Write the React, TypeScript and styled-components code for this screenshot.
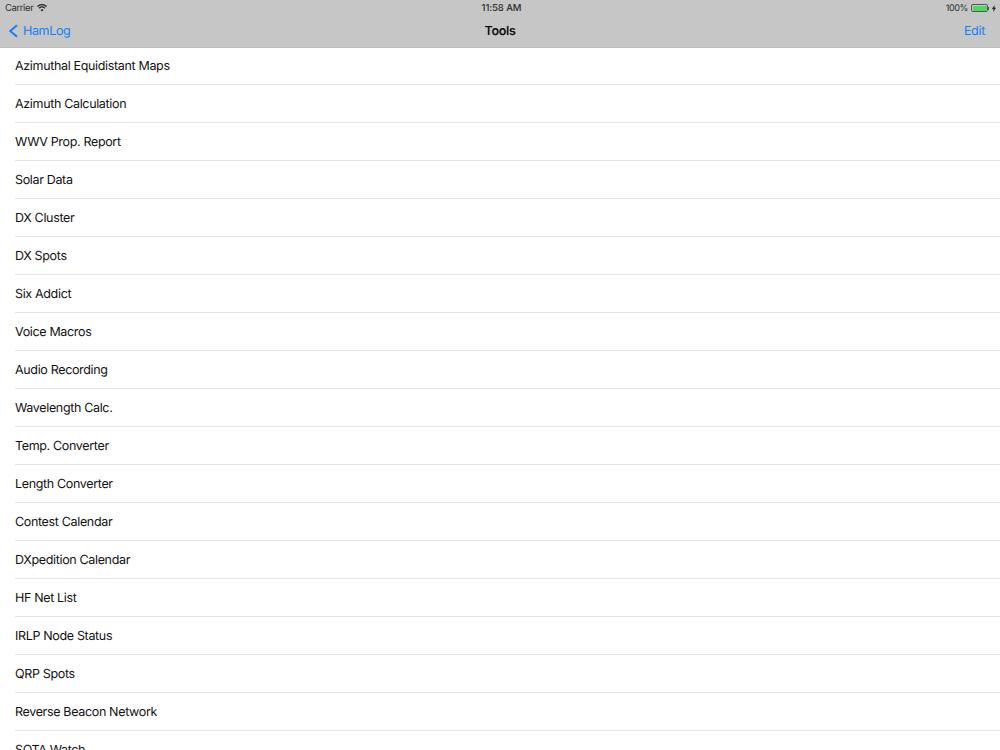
import React from "react";
import styled, { createGlobalStyle } from "styled-components";

const Global = createGlobalStyle`
  html, body { margin: 0; padding: 0; background: #fff; }
  body { font-family: Inter, "Liberation Sans", sans-serif; overflow: hidden; text-rendering: geometricPrecision; }
`;
const Page = styled.div`
  width: 1000px; height: 750px; overflow: hidden; display: flex; flex-direction: column; background: #fff;
`;
const Header = styled.header`
  flex: none; height: 47px; background: #c6c6c6; border-bottom: 1px solid #bcbcbc; box-sizing: content-box;
  display: flex; flex-direction: column;
`;
const StatusBar = styled.div`
  height: 15px; display: grid; grid-template-columns: 1fr auto 1fr; align-items: center;
  padding: 1px 4px 0 5px; box-sizing: border-box; font-size: 9.5px; color: #2e2e2e; letter-spacing: -0.4px;
`;
const StatusLeft = styled.div`display: flex; align-items: center; gap: 4px;`;
const StatusRight = styled.div`display: flex; align-items: center; justify-content: flex-end;`;
const Clock = styled.div`font-weight: 500; letter-spacing: -0.1px; transform: translateX(1px);`;
const Percent = styled.span`font-size: 9px; letter-spacing: -0.4px; margin-right: 3px;`;
const Battery = styled.div`
  width: 17px; height: 8px; box-sizing: border-box; border: 1px solid #555; border-radius: 2px; padding: 0.5px; display: flex;
`;
const BatteryFill = styled.div`flex: 1; background: #4cd964; border-radius: 1px;`;
const BatteryCap = styled.div`width: 1px; height: 3px; background: #555; margin-right: 3px;`;
const NavBar = styled.nav`
  flex: 1; display: grid; grid-template-columns: 1fr auto 1fr; align-items: center; padding: 0 15px 0 9px;
`;
const Back = styled.div`display: flex; align-items: center; gap: 3px; color: #157efb; font-size: 12.5px; letter-spacing: -0.35px;`;
const Title = styled.div`font-size: 12.5px; font-weight: 600; color: #111; letter-spacing: -0.35px; transform: translateX(3px);`;
const Edit = styled.div`justify-self: end; color: #157efb; font-size: 12.5px; letter-spacing: -0.3px;`;
const List = styled.ul`list-style: none; margin: 0; padding: 0 0 0 15px; flex: 1; overflow: hidden;`;
const Row = styled.li`
  height: 38px; box-sizing: border-box; display: flex; align-items: center; font-size: 12.5px; letter-spacing: -0.34px; color: #111;
  border-bottom: 1px solid #e3e3e3; padding-top: 1px;
  &:first-child { height: 37px; padding-top: 0; }
`;

const items = ["Azimuthal Equidistant Maps","Azimuth Calculation","WWV Prop. Report","Solar Data","DX Cluster","DX Spots","Six Addict","Voice Macros","Audio Recording","Wavelength Calc.","Temp. Converter","Length Converter","Contest Calendar","DXpedition Calendar","HF Net List","IRLP Node Status","QRP Spots","Reverse Beacon Network","SOTA Watch"];

export default function App() {
  return (
    <Page>
      <Global />
      <Header>
        <StatusBar>
          <StatusLeft>
            <span>Carrier</span>
            <svg width="10" height="8" viewBox="0 0 18 14" aria-hidden="true">
              <path d="M9 13.5 6.3 10.4a4 4 0 0 1 5.4 0L9 13.5ZM4.4 8.3 3 6.7a9 9 0 0 1 12 0l-1.4 1.6a7 7 0 0 0-9.2 0ZM1.6 5 0 3.3a13.4 13.4 0 0 1 18 0L16.400 5a11 11 0 0 0-14.800 0Z" fill="#222" />
            </svg>
          </StatusLeft>
          <Clock>11:58 AM</Clock>
          <StatusRight>
            <Percent>100%</Percent>
            <Battery><BatteryFill /></Battery>
            <BatteryCap />
            <svg width="4" height="7" viewBox="0 0 4 7" aria-hidden="true"><path d="M2.400 0 0 4h1.500L1.200 7 4 2.800H2.400Z" fill="#222" /></svg>
          </StatusRight>
        </StatusBar>
        <NavBar>
          <Back>
            <svg width="11" height="16" viewBox="0 0 11 16" aria-hidden="true"><path d="M8 2.200 1.200 8 8 13.800" fill="none" stroke="#157efb" strokeWidth="2.100" /></svg>
            <span>HamLog</span>
          </Back>
          <Title>Tools</Title>
          <Edit>Edit</Edit>
        </NavBar>
      </Header>
      <List>{items.map((t) => <Row key={t}>{t}</Row>)}</List>
    </Page>
  );
}
